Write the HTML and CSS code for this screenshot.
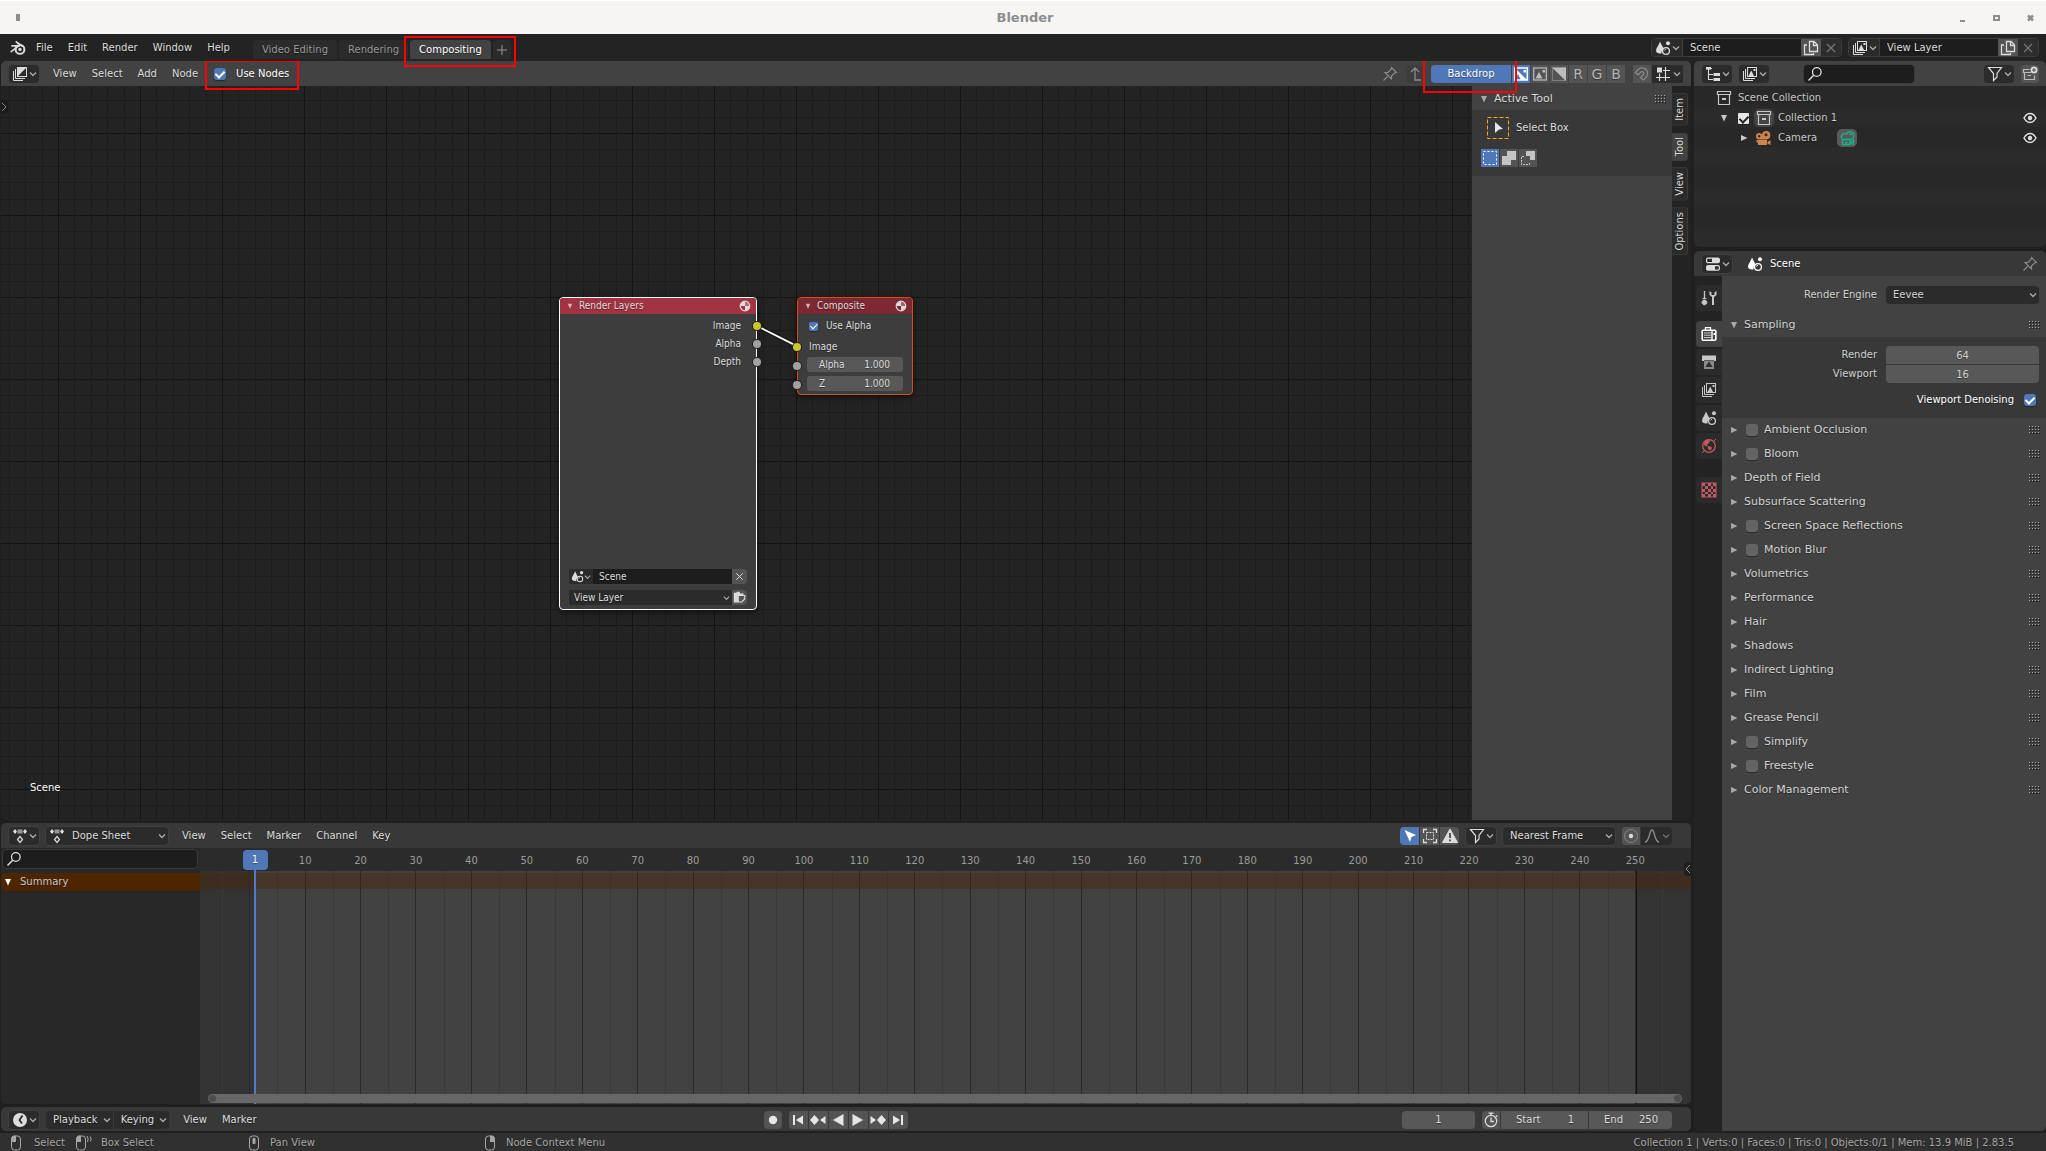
FILE: index.html
```html
<!DOCTYPE html>
<html lang="en">
<head>
    <meta charset="UTF-8">
    <meta name="viewport" content="width=device-width, initial-scale=1.0">
    <title>Blender</title>
    <link rel="stylesheet" href="styles.css">
</head>
<body>
    <!-- icon set, all on a 16x16 grid -->
    <svg class="icon-defs" width="0" height="0" aria-hidden="true">
        <symbol id="i-blender" viewBox="0 0 16 16"><circle cx="10" cy="9.4" r="4.4" fill="none" stroke="currentColor" stroke-width="2"/><circle cx="10" cy="9.4" r="1.7" fill="currentColor"/><path d="M2 5.8H9.5M6.3 2 12.5 6.2M1.2 11.6 8 6.3" fill="none" stroke="currentColor" stroke-width="1.7" stroke-linecap="round"/></symbol>
        <symbol id="i-chev" viewBox="0 0 8 8"><path d="M1 2.5 4 5.5 7 2.5" fill="none" stroke="currentColor" stroke-width="1.4"/></symbol>
        <symbol id="i-comp" viewBox="0 0 16 16"><path d="M1.5 5V14.5H11M3.5 3V12.5H13" fill="none" stroke="currentColor"/><rect x="5.5" y="1.5" width="9" height="9" fill="none" stroke="currentColor"/><path d="M5 11V1H15Z" fill="currentColor"/></symbol>
        <symbol id="i-layers" viewBox="0 0 16 16"><path d="M1.5 5V14.5H11M3.5 3V12.5H13" fill="none" stroke="currentColor"/><rect x="5.5" y="1.5" width="9" height="9" fill="none" stroke="currentColor"/><path d="M6.5 10 9.3 4.5 12 10Z" fill="currentColor"/><rect x="11.5" y="3" width="2" height="2" fill="currentColor"/></symbol>
        <symbol id="i-scene" viewBox="0 0 16 16"><path d="M5 1.5C6.5 5 8.5 7.5 8.5 9A4.5 4.5 0 0 0 6.5 13.5C3 14 1 12.5 1 10.5 1 8 4 5 5 1.5Z" fill="currentColor"/><circle cx="13" cy="3.3" r="2" fill="currentColor"/><circle cx="11" cy="11" r="3.4" fill="none" stroke="currentColor" stroke-width="1.3"/><path d="M9.5 10.5A2 2 0 0 1 11 9.2" fill="none" stroke="currentColor"/></symbol>
        <symbol id="i-copy" viewBox="0 0 16 16"><path d="M6.5 1.5H11L14.5 5V11.5H6.5ZM10.5 1.5V5.5H14.5M4 5H1.5V14.5H10.5V13" fill="none" stroke="currentColor" stroke-width="1.3"/></symbol>
        <symbol id="i-x" viewBox="0 0 16 16"><path d="M4 4 12 12M12 4 4 12" fill="none" stroke="currentColor" stroke-width="1.2"/></symbol>
        <symbol id="i-pin" viewBox="0 0 16 16"><path d="M9.5 1.5 14.5 6.5 12.5 7 9.5 10 9.5 13 3 6.5 6 6.5 9 3.5ZM5.5 10.5 1.5 14.5" fill="none" stroke="currentColor" stroke-width="1.1"/></symbol>
        <symbol id="i-up" viewBox="0 0 16 16"><path d="M4 6 8 2 12 6M8 2V14H14" fill="none" stroke="currentColor" stroke-width="1.3"/></symbol>
        <symbol id="i-coloralpha" viewBox="0 0 16 16"><rect x="1.7" y="2" width="12.6" height="12" fill="none" stroke="currentColor" stroke-width="1.5"/><path d="M2 2 14 14H8L5 8 3 12V5Z" fill="currentColor"/><rect x="10.5" y="4" width="2.5" height="2.5" fill="currentColor"/></symbol>
        <symbol id="i-color" viewBox="0 0 16 16"><rect x="1.7" y="2" width="12.6" height="12" fill="none" stroke="currentColor" stroke-width="1.2"/><path d="M3.5 12.5 7 6 10.5 12.5Z" fill="currentColor"/><rect x="10.5" y="4" width="2.5" height="2.5" fill="currentColor"/></symbol>
        <symbol id="i-alpha" viewBox="0 0 16 16"><rect x="1.5" y="2" width="13" height="12.5" fill="none" stroke="currentColor" opacity=".4"/><path d="M1 1.5H15V15Z" fill="currentColor"/></symbol>
        <symbol id="i-magnet" viewBox="0 0 16 16"><path d="M1.5 6.5 4 3.5A5.5 5.5 0 0 1 12 11.5L9 14 6.5 11.5 9.5 8.5A1.8 1.8 0 0 0 7 6L4 9Z" fill="none" stroke="currentColor" stroke-width="1.2"/></symbol>
        <symbol id="i-snapgrid" viewBox="0 0 16 16"><rect x="2" y="1.5" width="5" height="5" fill="currentColor"/><path d="M10.5 1V15M4.5 7.5V15M8 4.5H15M1 11.5H15" fill="none" stroke="currentColor" stroke-width="1.1"/></symbol>
        <symbol id="i-outliner" viewBox="0 0 16 16"><path d="M2 2.5H7M3.5 3V13.5H8M3.5 8.5H8" fill="none" stroke="currentColor" stroke-width="1.1"/><rect x="1" y="1" width="5" height="2.6" fill="currentColor"/><rect x="8.5" y="7" width="6.5" height="3" fill="currentColor"/><rect x="8.5" y="12" width="6.5" height="3" fill="currentColor"/></symbol>
        <symbol id="i-search" viewBox="0 0 16 16"><circle cx="9.8" cy="6" r="4.3" fill="none" stroke="currentColor" stroke-width="1.3"/><path d="M6.7 9.2 1.5 14.5" stroke="currentColor" stroke-width="1.5"/></symbol>
        <symbol id="i-filter" viewBox="0 0 16 16"><path d="M1.5 1.5H14.5L10 7.5V11L6.5 14.5V7.5Z" fill="none" stroke="currentColor" stroke-width="1.2"/></symbol>
        <symbol id="i-newcol" viewBox="0 0 16 16"><path d="M7.5 3.5H1.5V6.5H9M2.5 6.5V13.5H12.5V9.5M5.5 9.5H9" fill="none" stroke="currentColor" stroke-width="1.2" opacity=".75"/><circle cx="12" cy="4" r="3.5" fill="currentColor"/><path d="M12 2V6M10 4H14" stroke="#4c4c4c"/></symbol>
        <symbol id="i-collection" viewBox="0 0 16 16"><path d="M1.5 1.5H14.5V4.5H1.5ZM2.5 5V14.5H13.5V5" fill="none" stroke="currentColor" stroke-width="1.2"/><rect x="6" y="8" width="4" height="2" fill="currentColor"/></symbol>
        <symbol id="i-camera" viewBox="0 0 16 16"><path d="M1.5 10H12V15H3V12.5H1.5ZM12.5 12 15.5 10V15L12.5 13.5Z" fill="currentColor"/><path fill-rule="evenodd" d="M4.2 3A3.2 3.2 0 1 0 4.2 9.4H12A4.2 4.2 0 1 0 7 4.5 3.2 3.2 0 0 0 4.2 3ZM4.2 5A1.2 1.2 0 1 1 4.2 7.4 1.2 1.2 0 0 1 4.2 5ZM11 3.2A1.5 1.5 0 1 1 11 6.2 1.5 1.5 0 0 1 11 3.2Z" fill="currentColor"/></symbol>
        <symbol id="i-camdata" viewBox="0 0 16 16"><path d="M4 9.5H12A4 4 0 1 0 7.3 4 3 3 0 1 0 4 9.5ZM3.5 10V14.5H11V10M11.5 12.5 14.5 10.5V14.5L11.5 13M6 12.5H8.5M10.5 3.5A2 2 0 0 1 12.5 5.5" fill="none" stroke="currentColor" stroke-width="1.3"/></symbol>
        <symbol id="i-eye" viewBox="0 0 16 16"><path d="M2 8C4 4.3 6 3.5 8 3.5S12 4.3 14 8C12 11.7 10 12.5 8 12.5S4 11.7 2 8Z" fill="none" stroke="currentColor" stroke-width="1.5"/><circle cx="8" cy="8" r="2.2" fill="currentColor"/></symbol>
        <symbol id="i-props" viewBox="0 0 16 16"><rect x="1.6" y="2.1" width="12.8" height="4.6" rx="1.5" fill="none" stroke="currentColor" stroke-width="1.2"/><rect x="1.6" y="9.6" width="12.8" height="4.6" rx="1.5" fill="none" stroke="currentColor" stroke-width="1.2"/><rect x="7" y="2" width="7" height="5" fill="currentColor"/><rect x="2" y="10" width="8" height="4" fill="currentColor"/></symbol>
        <symbol id="i-tool" viewBox="0 0 16 16"><path d="M3.5 1V9" stroke="currentColor" stroke-width="1.3"/><path d="M1.5 8.5H5.5M3.5 10A2.4 2.4 0 1 1 3.4 10Z" fill="currentColor" stroke="currentColor"/><path d="M8.5 1V5L11 7V15H13V7L15.5 5V1L13.5 2.5V5H10.5V2.5Z" fill="currentColor"/></symbol>
        <symbol id="i-render" viewBox="0 0 16 16"><path d="M4.5 4V1.7H9.5V4" fill="none" stroke="currentColor" stroke-width="1.3"/><rect x="1.2" y="4.2" width="13.6" height="10" rx="1" fill="none" stroke="currentColor" stroke-width="1.6"/><path d="M3 7H10M3 9.3H10M3 11.5H10" stroke="currentColor" stroke-width="1.1" opacity=".7"/><path d="M11 4V14.5" stroke="currentColor" stroke-width="1.4"/><rect x="12.5" y="7" width="2" height="2" fill="currentColor"/></symbol>
        <symbol id="i-output" viewBox="0 0 16 16"><path d="M1 1.5H15V7H13V4H3V7H1Z" fill="currentColor"/><rect x="3" y="6.5" width="10" height="8.5" fill="currentColor" opacity=".6"/><path d="M4.5 13 8 7.5 11.5 13Z" fill="#2b2b2b"/><path d="M1 5H15" stroke="currentColor" stroke-width="2"/></symbol>
        <symbol id="i-world" viewBox="0 0 16 16"><circle cx="8" cy="8" r="6.3" fill="none" stroke="currentColor" stroke-width="1.3"/><path d="M3 4 6 2 8.5 2.5 7.5 5 5.5 6 6 8 3.5 7ZM7 8.5 10.5 9.5 9.5 12 8 11.5Z" fill="currentColor" stroke="currentColor"/><path d="M1 15 3.5 12.5M12.5 3.5 15 1" stroke="currentColor"/></symbol>
        <symbol id="i-texture" viewBox="0 0 16 16"><rect x="1" y="1" width="14" height="14" fill="none" stroke="currentColor"/><path d="M1 1H4V4H1ZM7 1H10V4H7ZM12 1H15V4H12ZM4 4H7V7H4ZM10 4H12V7H10ZM1 7H4V10H1ZM7 7H10V10H7ZM12 7H15V10H12ZM4 10H7V12H4ZM10 10H12V12H10ZM1 12H4V15H1ZM7 12H10V15H7ZM12 12H15V15H12Z" fill="currentColor"/></symbol>
        <symbol id="i-dope" viewBox="0 0 16 16"><path d="M3 1 5 3.5 3 6 1 3.5ZM13 1 15 3.5 13 6 11 3.5Z" fill="currentColor"/><rect x="5.5" y="1.5" width="5" height="4" fill="currentColor" opacity=".6"/><path d="M8 8.5 10.5 11.5 8 14.5 5.5 11.5Z" fill="none" stroke="currentColor" stroke-width="1.2"/></symbol>
        <symbol id="i-clock" viewBox="0 0 16 16"><circle cx="8" cy="8" r="7" fill="currentColor"/><path d="M10.5 3.5 7.5 8 10 11.5" fill="none" stroke="#2b2b2b" stroke-width="1.8"/></symbol>
        <symbol id="i-arrow" viewBox="0 0 16 16"><path d="M2.5 2 14 7 9.5 9 8 14Z" fill="currentColor"/></symbol>
        <symbol id="i-hidden" viewBox="0 0 16 16"><path d="M1.5 5V1.5H5M11 1.5H14.5V5M14.5 11V14.5H11M5 14.5H1.5V11" fill="none" stroke="currentColor" stroke-width="1.3"/><rect x="4.5" y="4.5" width="7" height="7" fill="none" stroke="currentColor" stroke-dasharray="2 1"/></symbol>
        <symbol id="i-warn" viewBox="0 0 16 16"><path d="M8 1 15.5 14.5H.5Z" fill="currentColor" stroke="currentColor" stroke-linejoin="round"/><path d="M8 5V10M8 11.5V13.3" stroke="#545454" stroke-width="2"/></symbol>
        <symbol id="i-prop" viewBox="0 0 16 16"><circle cx="8" cy="8" r="6.5" fill="none" stroke="currentColor" opacity=".35"/><circle cx="8" cy="8" r="2.2" fill="currentColor"/></symbol>
        <symbol id="i-falloff" viewBox="0 0 16 16"><path d="M1 14C6 13.5 5 2 8 2S10 13.5 15 14" fill="none" stroke="currentColor" stroke-width="1.3"/></symbol>
        <symbol id="i-stopwatch" viewBox="0 0 16 16"><circle cx="8" cy="9" r="5.7" fill="none" stroke="currentColor" stroke-width="1.2"/><path d="M5.5 1.2H10.5M8 1.5V3.5M8 5.5V9.5H11M13 3.5 14.3 4.8" fill="none" stroke="currentColor" stroke-width="1.3"/></symbol>
        <symbol id="i-mat" viewBox="0 0 16 16"><circle cx="8" cy="8" r="6.4" fill="none" stroke="currentColor" stroke-width="1.6"/><path d="M8 8V2A6 6 0 0 0 2 8ZM8 8V14A6 6 0 0 0 14 8Z" fill="currentColor"/><path d="M8 8V2A6 6 0 0 1 14 8Z" fill="currentColor" opacity=".35"/></symbol>
        <symbol id="i-rlayer" viewBox="0 0 16 16"><path d="M1 2H4L5 1H8L9 3H13V5H6V14H1Z" fill="currentColor"/><path d="M6.5 5.5H14.5V9.5L11 13.5H6.5Z" fill="none" stroke="currentColor" stroke-width="1.4"/></symbol>
        <symbol id="i-record" viewBox="0 0 16 16"><circle cx="8" cy="8" r="4.2" fill="currentColor"/></symbol>
        <symbol id="i-first" viewBox="0 0 16 16"><path d="M3 3H5V13H3ZM13 3.5V12.5L6 8Z" fill="currentColor"/></symbol>
        <symbol id="i-prevkey" viewBox="0 0 16 16"><path d="M4.5 3 9 8 4.5 13 0 8ZM15.5 4V12L10 8Z" fill="currentColor"/></symbol>
        <symbol id="i-back" viewBox="0 0 16 16"><path d="M13.5 2V14L3 8Z" fill="currentColor"/></symbol>
        <symbol id="i-play" viewBox="0 0 16 16"><path d="M2.5 2V14L13 8Z" fill="currentColor"/></symbol>
        <symbol id="i-nextkey" viewBox="0 0 16 16"><path d="M11.5 3 16 8 11.5 13 7 8ZM.5 4V12L6 8Z" fill="currentColor"/></symbol>
        <symbol id="i-last" viewBox="0 0 16 16"><path d="M11 3H13V13H11ZM3 3.5V12.5L10 8Z" fill="currentColor"/></symbol>
        <symbol id="i-lmb" viewBox="0 0 16 16"><rect x="3.5" y="1" width="9" height="14" rx="3" fill="none" stroke="currentColor"/><path d="M3.5 7V4A3 3 0 0 1 8 1V7Z" fill="currentColor"/></symbol>
        <symbol id="i-lmbdrag" viewBox="0 0 18 16"><rect x="1.5" y="1" width="9" height="14" rx="3" fill="none" stroke="currentColor"/><path d="M1.5 7V4A3 3 0 0 1 6 1V7Z" fill="currentColor"/><path d="M12 1Q14 4 12.5 7M15 1.5Q17 4 15.5 6.5" fill="none" stroke="currentColor"/></symbol>
        <symbol id="i-mmb" viewBox="0 0 16 16"><rect x="3.5" y="1" width="9" height="14" rx="3" fill="none" stroke="currentColor"/><rect x="6.5" y="3" width="3" height="6" rx="1" fill="currentColor"/></symbol>
        <symbol id="i-rmb" viewBox="0 0 16 16"><rect x="3.5" y="1" width="9" height="14" rx="3" fill="none" stroke="currentColor"/><path d="M12.5 7V4A3 3 0 0 0 8 1V7Z" fill="currentColor"/></symbol>
        <symbol id="i-grip" viewBox="0 0 11 8"><path d="M0 .5H1M3 .5H4M6 .5H7M9 .5H10M0 3.5H1M3 3.5H4M6 3.5H7M9 3.5H10M0 6.5H1M3 6.5H4M6 6.5H7M9 6.5H10" stroke="#a8a8a8"/><path d="M1 1.5H2M4 1.5H5M7 1.5H8M10 1.5H11M1 4.5H2M4 4.5H5M7 4.5H8M10 4.5H11M1 7.5H2M4 7.5H5M7 7.5H8M10 7.5H11" stroke="#151515"/></symbol>
        <symbol id="i-down" viewBox="0 0 8 8"><path d="M1 1H7L4 7.5Z" fill="currentColor"/></symbol>
        <symbol id="i-right" viewBox="0 0 8 8"><path d="M1 1V7L7.5 4Z" fill="currentColor"/></symbol>
    </svg>

    <header class="titlebar">
        <span class="app-mark"></span>
        <h1>Blender</h1>
        <svg class="wm-buttons" width="74" height="10"><path d="M0 7H5V9H0Z" fill="#8b8e8f"/><path d="M33 2H40V8H33ZM35 4V6H38V4Z" fill="#8b8e8f" fill-rule="evenodd"/><path d="M68 2.5 73 7.5M73 2.5 68 7.5" stroke="#8b8e8f" stroke-width="2.5"/></svg>
    </header>

    <div class="topbar">
        <svg class="icon logo"><use href="#i-blender"/></svg>
        <nav class="menus">
            <button>File</button>
            <button>Edit</button>
            <button>Render</button>
            <button>Window</button>
            <button>Help</button>
        </nav>
        <div class="workspaces">
            <button>Video Editing</button>
            <button>Rendering</button>
            <div class="marked">
                <button class="active">Compositing</button>
                <button class="add" aria-label="Add workspace"><svg width="10" height="10"><path d="M5 0V10M0 5H10" stroke="currentColor"/></svg></button>
            </div>
        </div>
        <div class="id-blocks">
            <div class="id-block">
                <button class="drop" aria-label="Browse scene"><svg class="icon"><use href="#i-scene"/></svg><svg class="chev"><use href="#i-chev"/></svg></button>
                <input type="text" value="Scene" aria-label="Scene">
                <button class="light" aria-label="New scene"><svg class="icon"><use href="#i-copy"/></svg></button>
                <button class="off" aria-label="Delete scene"><svg class="icon"><use href="#i-x"/></svg></button>
            </div>
            <div class="id-block">
                <button class="drop" aria-label="Browse view layer"><svg class="icon"><use href="#i-layers"/></svg><svg class="chev"><use href="#i-chev"/></svg></button>
                <input type="text" value="View Layer" aria-label="View layer">
                <button class="light" aria-label="New view layer"><svg class="icon"><use href="#i-copy"/></svg></button>
                <button class="off" aria-label="Delete view layer"><svg class="icon"><use href="#i-x"/></svg></button>
            </div>
        </div>
    </div>

    <div class="screen">
        <main class="left">
            <!-- compositor -->
            <section class="area node-editor">
                <div class="area-header light-header">
                    <button class="drop" aria-label="Editor type"><svg class="icon"><use href="#i-comp"/></svg><svg class="chev"><use href="#i-chev"/></svg></button>
                    <nav class="menus">
                        <button>View</button>
                        <button>Select</button>
                        <button>Add</button>
                        <button>Node</button>
                    </nav>
                    <div class="marked use-nodes">
                        <label><input type="checkbox" class="check" checked>Use Nodes</label>
                    </div>
                    <div class="tools">
                        <button class="plain" aria-label="Pin"><svg class="icon"><use href="#i-pin"/></svg></button>
                        <button class="plain parent" aria-label="Go to parent"><svg class="icon"><use href="#i-up"/></svg></button>
                        <div class="group">
                            <div class="marked backdrop"><button class="on">Backdrop</button></div>
                            <button class="on" aria-label="Color and alpha"><svg class="icon"><use href="#i-coloralpha"/></svg></button>
                            <button class="soft" aria-label="Color"><svg class="icon"><use href="#i-color"/></svg></button>
                            <button class="soft" aria-label="Alpha"><svg class="icon"><use href="#i-alpha"/></svg></button>
                            <button class="channel">R</button>
                            <button class="channel">G</button>
                            <button class="channel">B</button>
                        </div>
                        <div class="group">
                            <button class="dim" aria-label="Snap"><svg class="icon"><use href="#i-magnet"/></svg></button>
                            <button class="drop" aria-label="Snap target"><svg class="icon"><use href="#i-snapgrid"/></svg><svg class="chev"><use href="#i-chev"/></svg></button>
                        </div>
                    </div>
                </div>
                <div class="node-body">
                    <div class="canvas">
                        <svg class="grid" width="100%" height="100%">
                            <defs>
                                <pattern id="grid" x="57" y="47" width="82" height="82" patternUnits="userSpaceOnUse">
                                    <path d="M16.5 0V82M33.5 0V82M49.5 0V82M66.5 0V82M0 16.5H82M0 33.5H82M0 49.5H82M0 66.5H82" stroke="#1c1c1c"/>
                                    <path d="M.5 0V82M0 .5H82" stroke="#141414"/>
                                </pattern>
                            </defs>
                            <rect width="100%" height="100%" fill="url(#grid)"/>
                        </svg>
                        <button class="toggle-left" aria-label="Show toolbar"><svg width="8" height="8"><path d="M1 0 5 4 1 8" fill="none" stroke="#888"/></svg></button>

                        <div class="node render-layers">
                            <div class="node-title"><svg class="tri"><use href="#i-down"/></svg>Render Layers<svg class="mat"><use href="#i-mat"/></svg></div>
                            <ul class="outputs">
                                <li>Image<i class="socket yellow"></i></li>
                                <li>Alpha<i class="socket"></i></li>
                                <li>Depth<i class="socket"></i></li>
                            </ul>
                            <div class="node-footer">
                                <div class="node-row">
                                    <button class="drop" aria-label="Browse scene"><svg class="icon"><use href="#i-scene"/></svg><svg class="chev"><use href="#i-chev"/></svg></button>
                                    <input type="text" value="Scene" aria-label="Scene">
                                    <button class="end" aria-label="Unlink"><svg class="icon"><use href="#i-x"/></svg></button>
                                </div>
                                <div class="node-row">
                                    <span class="select"><select aria-label="Layer"><option>View Layer</option></select><svg class="chev"><use href="#i-chev"/></svg></span>
                                    <button class="end" aria-label="Render layer"><svg class="icon"><use href="#i-rlayer"/></svg></button>
                                </div>
                            </div>
                        </div>

                        <div class="node composite">
                            <div class="node-title"><svg class="tri"><use href="#i-down"/></svg>Composite<svg class="mat"><use href="#i-mat"/></svg></div>
                            <label class="use-alpha"><input type="checkbox" class="check" checked>Use Alpha</label>
                            <ul class="inputs">
                                <li><i class="socket yellow"></i>Image</li>
                                <li><i class="socket"></i><label class="slider">Alpha<input type="text" value="1.000"></label></li>
                                <li><i class="socket"></i><label class="slider">Z<input type="text" value="1.000"></label></li>
                            </ul>
                        </div>

                        <svg class="link" width="42" height="24"><path d="M0 1 42 22" stroke="#111" stroke-width="4"/><path d="M0 1 42 22" stroke="#fff" stroke-width="2"/></svg>
                        <span class="backdrop-name">Scene</span>
                    </div>
                    <aside class="sidebar">
                        <h2 class="panel-title"><svg class="tri"><use href="#i-down"/></svg>Active Tool<svg class="grip"><use href="#i-grip"/></svg></h2>
                        <div class="tool-panel">
                            <div class="tool-name">
                                <svg width="22" height="22"><rect x=".5" y=".5" width="21" height="21" fill="none" stroke="#f5a623" stroke-dasharray="4 2"/><path d="M8 5 16 12 12 12.5 8 16Z" fill="#e6e6e6"/></svg>
                                Select Box
                            </div>
                            <div class="group">
                                <button class="on" aria-label="Set"><svg class="icon"><rect x="1.5" y="1.5" width="13" height="13" fill="none" stroke="#fff" stroke-dasharray="2 2"/></svg></button>
                                <button aria-label="Extend"><svg class="icon"><path d="M6 1H15V10H10V15H1V6H6Z" fill="#c4c4c4"/></svg></button>
                                <button aria-label="Subtract"><svg class="icon"><path d="M6 1H15V10H10V6H6Z" fill="#c4c4c4"/><path d="M4 6.5H1.5V14.5H9.5V12" fill="none" stroke="#c4c4c4" stroke-dasharray="2 1"/></svg></button>
                            </div>
                        </div>
                    </aside>
                    <div class="side-tabs">
                        <button>Item</button>
                        <button class="active">Tool</button>
                        <button>View</button>
                        <button>Options</button>
                    </div>
                </div>
            </section>

            <!-- dope sheet -->
            <section class="area dope-sheet">
                <div class="area-header">
                    <button class="drop" aria-label="Editor type"><svg class="icon"><use href="#i-dope"/></svg><svg class="chev"><use href="#i-chev"/></svg></button>
                    <span class="select mode"><svg class="icon"><use href="#i-dope"/></svg><select aria-label="Mode"><option>Dope Sheet</option></select><svg class="chev"><use href="#i-chev"/></svg></span>
                    <nav class="menus">
                        <button>View</button>
                        <button>Select</button>
                        <button>Marker</button>
                        <button>Channel</button>
                        <button>Key</button>
                    </nav>
                    <div class="tools">
                        <div class="group toggles">
                            <button class="on" aria-label="Only selected"><svg class="icon"><use href="#i-arrow"/></svg></button>
                            <button aria-label="Show hidden"><svg class="icon"><use href="#i-hidden"/></svg></button>
                            <button aria-label="Only errors"><svg class="icon"><use href="#i-warn"/></svg></button>
                        </div>
                        <button class="drop" aria-label="Filters"><svg class="icon"><use href="#i-filter"/></svg><svg class="chev"><use href="#i-chev"/></svg></button>
                        <span class="select snap"><select aria-label="Auto snap"><option>Nearest Frame</option></select><svg class="chev"><use href="#i-chev"/></svg></span>
                        <div class="group">
                            <button aria-label="Proportional editing"><svg class="icon"><use href="#i-prop"/></svg></button>
                            <button class="drop dim" aria-label="Falloff"><svg class="icon"><use href="#i-falloff"/></svg><svg class="chev"><use href="#i-chev"/></svg></button>
                        </div>
                    </div>
                </div>
                <div class="dope-body">
                    <div class="channels">
                        <label class="search"><svg class="icon"><use href="#i-search"/></svg><input type="text" aria-label="Filter channels"></label>
                        <div class="summary"><svg class="tri"><use href="#i-down"/></svg>Summary</div>
                    </div>
                    <div class="tracks">
                        <div class="range"></div>
                        <div class="frames">
                            <span></span><span>10</span><span>20</span><span>30</span><span>40</span><span>50</span><span>60</span>
                            <span>70</span><span>80</span><span>90</span><span>100</span><span>110</span><span>120</span><span>130</span>
                            <span>140</span><span>150</span><span>160</span><span>170</span><span>180</span><span>190</span><span>200</span>
                            <span>210</span><span>220</span><span>230</span><span>240</span><span>250</span>
                        </div>
                        <div class="summary-strip"></div>
                        <div class="playhead"><b>1</b></div>
                        <div class="scrollbar"></div>
                        <button class="toggle-right" aria-label="Show sidebar"><svg width="6" height="8"><path d="M5 0 1 4 5 8" fill="none" stroke="#999"/></svg></button>
                    </div>
                </div>
            </section>

            <!-- timeline -->
            <section class="area">
                <div class="area-header timeline">
                    <div class="timeline-left">
                        <button class="drop" aria-label="Editor type"><svg class="icon"><use href="#i-clock"/></svg><svg class="chev"><use href="#i-chev"/></svg></button>
                        <div class="group popovers">
                            <button class="drop">Playback<svg class="chev"><use href="#i-chev"/></svg></button>
                            <button class="drop">Keying<svg class="chev"><use href="#i-chev"/></svg></button>
                        </div>
                        <nav class="menus">
                            <button>View</button>
                            <button>Marker</button>
                        </nav>
                    </div>
                    <div class="transport">
                        <div class="group"><button aria-label="Auto keying"><svg class="icon"><use href="#i-record"/></svg></button></div>
                        <div class="group">
                            <button aria-label="First frame"><svg class="icon"><use href="#i-first"/></svg></button>
                            <button aria-label="Previous keyframe"><svg class="icon"><use href="#i-prevkey"/></svg></button>
                            <button aria-label="Play backwards"><svg class="icon"><use href="#i-back"/></svg></button>
                            <button aria-label="Play"><svg class="icon"><use href="#i-play"/></svg></button>
                            <button aria-label="Next keyframe"><svg class="icon"><use href="#i-nextkey"/></svg></button>
                            <button aria-label="Last frame"><svg class="icon"><use href="#i-last"/></svg></button>
                        </div>
                    </div>
                    <div class="tools">
                        <div class="group"><input type="text" class="current" value="1" aria-label="Current frame"></div>
                        <div class="group">
                            <button aria-label="Preview range"><svg class="icon"><use href="#i-stopwatch"/></svg></button>
                            <label class="num">Start<input type="text" value="1"></label>
                            <label class="num">End<input type="text" value="250"></label>
                        </div>
                    </div>
                </div>
            </section>
        </main>

        <aside class="right">
            <!-- outliner -->
            <section class="area outliner">
                <div class="area-header light-header">
                    <button class="drop" aria-label="Editor type"><svg class="icon"><use href="#i-outliner"/></svg><svg class="chev"><use href="#i-chev"/></svg></button>
                    <button class="drop" aria-label="Display mode"><svg class="icon"><use href="#i-layers"/></svg><svg class="chev"><use href="#i-chev"/></svg></button>
                    <label class="search"><svg class="icon"><use href="#i-search"/></svg><input type="text" aria-label="Filter"></label>
                    <button class="drop" aria-label="Filters"><svg class="icon"><use href="#i-filter"/></svg><svg class="chev"><use href="#i-chev"/></svg></button>
                    <div class="group"><button aria-label="New collection"><svg class="icon"><use href="#i-newcol"/></svg></button></div>
                </div>
                <ul class="tree">
                    <li><svg class="icon"><use href="#i-collection"/></svg>Scene Collection</li>
                    <li class="level1">
                        <svg class="tri"><use href="#i-down"/></svg>
                        <input type="checkbox" class="check white" checked aria-label="Include collection">
                        <span class="badge"><svg class="icon"><use href="#i-collection"/></svg></span>Collection 1
                        <svg class="icon eye"><use href="#i-eye"/></svg>
                    </li>
                    <li class="level2">
                        <svg class="tri"><use href="#i-right"/></svg>
                        <svg class="icon orange"><use href="#i-camera"/></svg>Camera
                        <span class="badge green"><svg class="icon"><use href="#i-camdata"/></svg></span>
                        <svg class="icon eye"><use href="#i-eye"/></svg>
                    </li>
                    <li></li>
                    <li></li>
                    <li></li>
                    <li></li>
                    <li></li>
                </ul>
            </section>

            <!-- properties -->
            <section class="area properties">
                <div class="area-header">
                    <button class="drop" aria-label="Editor type"><svg class="icon"><use href="#i-props"/></svg><svg class="chev"><use href="#i-chev"/></svg></button>
                    <span class="context"><svg class="icon"><use href="#i-scene"/></svg>Scene</span>
                    <div class="tools"><button class="plain" aria-label="Pin"><svg class="icon"><use href="#i-pin"/></svg></button></div>
                </div>
                <div class="props-body">
                    <nav class="prop-tabs">
                        <button class="alone" aria-label="Tool"><svg class="icon"><use href="#i-tool"/></svg></button>
                        <button class="active" aria-label="Render"><svg class="icon"><use href="#i-render"/></svg></button>
                        <button aria-label="Output"><svg class="icon"><use href="#i-output"/></svg></button>
                        <button aria-label="View layer"><svg class="icon"><use href="#i-layers"/></svg></button>
                        <button aria-label="Scene"><svg class="icon"><use href="#i-scene"/></svg></button>
                        <button class="red" aria-label="World"><svg class="icon"><use href="#i-world"/></svg></button>
                        <button class="red last" aria-label="Texture"><svg class="icon"><use href="#i-texture"/></svg></button>
                    </nav>
                    <div class="panels">
                        <div class="prop-row engine">
                            <label for="engine">Render Engine</label>
                            <span class="select"><select id="engine"><option>Eevee</option></select><svg class="chev"><use href="#i-chev"/></svg></span>
                        </div>
                        <h2 class="panel-title"><svg class="tri"><use href="#i-down"/></svg>Sampling<svg class="grip"><use href="#i-grip"/></svg></h2>
                        <div class="sampling">
                            <div class="prop-row"><label for="s-render">Render</label><input type="text" id="s-render" value="64"></div>
                            <div class="prop-row"><label for="s-viewport">Viewport</label><input type="text" id="s-viewport" value="16"></div>
                            <label class="denoise">Viewport Denoising<input type="checkbox" class="check" checked></label>
                        </div>
                        <h2 class="panel-title"><svg class="tri"><use href="#i-right"/></svg><label><input type="checkbox" class="check">Ambient Occlusion</label><svg class="grip"><use href="#i-grip"/></svg></h2>
                        <h2 class="panel-title"><svg class="tri"><use href="#i-right"/></svg><label><input type="checkbox" class="check">Bloom</label><svg class="grip"><use href="#i-grip"/></svg></h2>
                        <h2 class="panel-title"><svg class="tri"><use href="#i-right"/></svg>Depth of Field<svg class="grip"><use href="#i-grip"/></svg></h2>
                        <h2 class="panel-title"><svg class="tri"><use href="#i-right"/></svg>Subsurface Scattering<svg class="grip"><use href="#i-grip"/></svg></h2>
                        <h2 class="panel-title"><svg class="tri"><use href="#i-right"/></svg><label><input type="checkbox" class="check">Screen Space Reflections</label><svg class="grip"><use href="#i-grip"/></svg></h2>
                        <h2 class="panel-title"><svg class="tri"><use href="#i-right"/></svg><label><input type="checkbox" class="check">Motion Blur</label><svg class="grip"><use href="#i-grip"/></svg></h2>
                        <h2 class="panel-title"><svg class="tri"><use href="#i-right"/></svg>Volumetrics<svg class="grip"><use href="#i-grip"/></svg></h2>
                        <h2 class="panel-title"><svg class="tri"><use href="#i-right"/></svg>Performance<svg class="grip"><use href="#i-grip"/></svg></h2>
                        <h2 class="panel-title"><svg class="tri"><use href="#i-right"/></svg>Hair<svg class="grip"><use href="#i-grip"/></svg></h2>
                        <h2 class="panel-title"><svg class="tri"><use href="#i-right"/></svg>Shadows<svg class="grip"><use href="#i-grip"/></svg></h2>
                        <h2 class="panel-title"><svg class="tri"><use href="#i-right"/></svg>Indirect Lighting<svg class="grip"><use href="#i-grip"/></svg></h2>
                        <h2 class="panel-title"><svg class="tri"><use href="#i-right"/></svg>Film<svg class="grip"><use href="#i-grip"/></svg></h2>
                        <h2 class="panel-title"><svg class="tri"><use href="#i-right"/></svg>Grease Pencil<svg class="grip"><use href="#i-grip"/></svg></h2>
                        <h2 class="panel-title"><svg class="tri"><use href="#i-right"/></svg><label><input type="checkbox" class="check">Simplify</label><svg class="grip"><use href="#i-grip"/></svg></h2>
                        <h2 class="panel-title"><svg class="tri"><use href="#i-right"/></svg><label><input type="checkbox" class="check">Freestyle</label><svg class="grip"><use href="#i-grip"/></svg></h2>
                        <h2 class="panel-title"><svg class="tri"><use href="#i-right"/></svg>Color Management<svg class="grip"><use href="#i-grip"/></svg></h2>
                    </div>
                </div>
            </section>
        </aside>
    </div>

    <footer class="statusbar">
        <span class="hint select-hint"><svg class="icon"><use href="#i-lmb"/></svg>Select</span>
        <span class="hint box-hint"><svg class="icon"><use href="#i-lmbdrag"/></svg>Box Select</span>
        <span class="hint pan-hint"><svg class="icon"><use href="#i-mmb"/></svg>Pan View</span>
        <span class="hint"><svg class="icon"><use href="#i-rmb"/></svg>Node Context Menu</span>
        <span class="stats">Collection 1 | Verts:0 | Faces:0 | Tris:0 | Objects:0/1 | Mem: 13.9 MiB | 2.83.5</span>
    </footer>
</body>
</html>
```
FILE: styles.css
```css
* {
    box-sizing: border-box;
}
body {
    margin: 0;
    height: 100vh;
    display: flex;
    flex-direction: column;
    overflow: hidden;
    background: #1f1f1f;
    color: #dcdcdc;
    font-family: "DejaVu Sans", sans-serif;
    font-size: 10px;
    line-height: 16px;
    text-shadow: 0 1px 1px rgba(0, 0, 0, 0.4);
}
button, input, select {
    font: inherit;
    color: inherit;
    text-shadow: inherit;
    background: none;
    border: 0;
    margin: 0;
    padding: 0;
    min-width: 0;
}
button {
    display: flex;
    align-items: center;
    justify-content: center;
    flex-shrink: 0;
}
ul {
    list-style: none;
    margin: 0;
    padding: 0;
}
.icon-defs {
    position: absolute;
}
.icon {
    width: 16px;
    height: 16px;
    flex-shrink: 0;
}
.chev, .tri {
    width: 8px;
    height: 8px;
    flex-shrink: 0;
}
.chev {
    color: #a8a8a8;
}
.grip {
    width: 11px;
    height: 8px;
    margin-left: auto;
}
/* red outlines around the controls to notice */
.marked {
    position: relative;
    display: flex;
}
.marked::after {
    content: "";
    position: absolute;
    z-index: 2;
    border: 2px solid #ff0000;
    pointer-events: none;
}

/* window title */
.titlebar {
    height: 34px;
    flex-shrink: 0;
    display: flex;
    align-items: center;
    justify-content: space-between;
    padding: 0 12px 0 16px;
    background: #f6f5f4;
    border-top: 1px solid #fff;
    text-shadow: none;
}
.titlebar h1 {
    margin: 0 0 0 70px;
    font-size: 13px;
    color: #8b8e8f;
}
.app-mark {
    width: 4px;
    height: 7px;
    background: #8b8e8f;
}

/* top bar */
.topbar {
    height: 27px;
    flex-shrink: 0;
    display: flex;
    padding: 0 7px 0 10px;
    background: #232323;
}
.logo {
    margin-top: 6px;
    margin-right: 2px;
}
.menus {
    display: flex;
}
.menus button {
    padding: 0 7px 0 8px;
}
.topbar .menus {
    height: 27px;
}
.workspaces {
    display: flex;
    gap: 2px;
    margin-left: 16px;
    padding-top: 6px;
    padding-bottom: 2px;
}
.workspaces .marked {
    gap: 2px;
}
.workspaces button {
    padding: 0 9px;
    border-radius: 4px 4px 0 0;
    background: #2b2b2b;
    color: #989898;
}
.workspaces .active {
    background: #424242;
    color: #fff;
}
.workspaces .add {
    padding: 0 4px;
}
.workspaces .marked::after {
    inset: -4px -5px -8px -6px;
}
.id-blocks {
    display: flex;
    gap: 6px;
    margin-left: auto;
    padding: 4px 0;
}
.id-block {
    display: flex;
    width: 191px;
    border: 1px solid #3d3d3d;
    border-radius: 4px;
    background: #1d1d1d;
    overflow: hidden;
}
.id-block input {
    flex: 1;
    padding-left: 7px;
    border-left: 1px solid #3d3d3d;
}
.id-block .drop {
    width: 30px;
    height: auto;
    border: 0;
    border-radius: 0;
}
.id-block .light, .id-block .off {
    width: 20px;
    background: #545454;
}
.id-block .off {
    background: #2d2d2d;
    color: #777;
}

/* editors */
.screen {
    flex: 1;
    min-height: 0;
    display: flex;
    gap: 3px;
    padding-left: 1px;
}
.left {
    flex: 1;
    min-width: 0;
    display: flex;
    flex-direction: column;
    gap: 3px;
}
.right {
    width: 352px;
    display: flex;
    flex-direction: column;
    gap: 4px;
}
.area {
    border-radius: 5px;
    overflow: hidden;
}
.area-header {
    height: 25px;
    display: flex;
    align-items: center;
    padding: 1px 0 0 8px;
    background: #383838;
}
.light-header {
    background: #424242;
}
.area-header .menus {
    margin-left: 6px;
}
.tools {
    display: flex;
    align-items: center;
    gap: 7px;
    margin-left: auto;
}
.drop {
    width: 30px;
    height: 18px;
    padding: 0 2px 0 3px;
    justify-content: space-between;
    background: #2b2b2b;
    border-radius: 4px;
    box-shadow: 0 0 0 1px #404040;
}
.id-block .drop, .group .drop, .node .drop {
    box-shadow: none;
}
.group {
    display: flex;
    gap: 1px;
    height: 18px;
    border-radius: 4px;
    overflow: hidden;
}
.group > button {
    width: 18px;
    background: #545454;
}
.group > .drop {
    width: 31px;
    background: #2b2b2b;
    border-radius: 0;
}
.group > .on, .backdrop .on {
    background: #5078b8;
    color: #fff;
}
.select {
    position: relative;
    display: flex;
    align-items: center;
    height: 18px;
    background: #2b2b2b;
    border-radius: 4px;
    box-shadow: 0 0 0 1px #404040;
}
.select select {
    appearance: none;
    width: 100%;
    height: 100%;
    padding-left: 7px;
}
.select .chev {
    position: absolute;
    right: 2px;
    pointer-events: none;
}
.check {
    appearance: none;
    width: 12px;
    height: 12px;
    flex-shrink: 0;
    border-radius: 3px;
    background: #636363;
    box-shadow: 0 1px 1px rgba(0, 0, 0, 0.4);
}
.check:checked {
    background: #5078b8;
}
.check:checked::before {
    content: "";
    display: block;
    width: 4px;
    height: 7px;
    margin: 1px auto;
    border: solid #fff;
    border-width: 0 2px 2px 0;
    transform: rotate(45deg);
}
.search {
    display: flex;
    align-items: center;
    height: 18px;
    padding: 0 3px;
    background: #1d1d1d;
    border-radius: 4px;
    box-shadow: 0 0 0 1px #3a3a3a;
}
.search input {
    flex: 1;
}
.panel-title {
    display: flex;
    align-items: center;
    height: 24px;
    margin: 0;
    padding: 0 6px 0 8px;
    font-size: 11px;
    font-weight: normal;
}
.panel-title .tri {
    margin-right: 6px;
    color: #a8a8a8;
}
.panel-title label {
    display: flex;
    align-items: center;
    gap: 6px;
    margin-left: 2px;
}

/* node editor */
.node-editor {
    flex: 1;
    min-height: 0;
    display: flex;
    flex-direction: column;
}
.node-editor .area-header {
    flex-shrink: 0;
}
.use-nodes {
    margin-left: 9px;
}
.use-nodes label {
    display: flex;
    align-items: center;
    gap: 10px;
    color: #fff;
}
.use-nodes::after {
    inset: -6px -10px -8px -9px;
}
.node-editor .tools {
    gap: 8px;
    padding-right: 8px;
}
.plain {
    width: 17px;
    height: 18px;
    color: #8c8c8c;
}
.parent {
    background: #3d3d3d;
    border-radius: 4px;
}
.node-editor .group {
    overflow: visible;
}
.backdrop .on {
    width: 80px;
    border-radius: 4px 0 0 4px;
}
.backdrop::after {
    inset: -8px -6px -10px -8px;
}
.soft {
    color: #bcbcbc;
}
.channel {
    font-size: 14px;
    color: #b5b5b5;
}
.node-body {
    flex: 1;
    min-height: 0;
    display: flex;
    background: #232323;
}
.canvas {
    position: relative;
    flex: 1;
    overflow: hidden;
}
.grid {
    display: block;
}
.toggle-left {
    position: absolute;
    left: 0;
    top: 14px;
    width: 7px;
    height: 14px;
    background: #1b1b1b;
    border-radius: 0 4px 4px 0;
}
.node {
    position: absolute;
    top: 211px;
    background: #3d3d3d;
    border: 1px solid #fff;
    border-radius: 4px;
    box-shadow: 0 2px 6px rgba(0, 0, 0, 0.6);
    font-family: "DejaVu Sans Condensed", "DejaVu Sans", sans-serif;
}
.render-layers {
    left: 558px;
    width: 198px;
    height: 313px;
    display: flex;
    flex-direction: column;
}
.composite {
    left: 796px;
    width: 116px;
    height: 98px;
    border-color: #d9500a;
}
.node-title {
    display: flex;
    align-items: center;
    height: 16px;
    padding: 0 5px 0 6px;
    border-radius: 3px 3px 0 0;
    background: #a23340;
}
.composite .node-title {
    background: #7d2832;
}
.node-title .tri {
    width: 8px;
    height: 6px;
    margin-right: 5px;
    color: #d7b1b5;
}
.mat {
    width: 12px;
    height: 12px;
    margin-left: auto;
}
.outputs {
    padding: 3px 15px 0 0;
    text-align: right;
}
.outputs li, .inputs li {
    position: relative;
    height: 18px;
    line-height: 18px;
}
.socket {
    position: absolute;
    top: 5px;
    width: 8px;
    height: 8px;
    border-radius: 50%;
    background: #a1a1a1;
    box-shadow: 0 0 0 1px #222;
    z-index: 1;
}
.yellow {
    background: #c7c729;
}
.outputs .socket {
    right: -20px;
}
.inputs .socket {
    left: -16px;
}
.node-footer {
    display: flex;
    flex-direction: column;
    gap: 6px;
    margin-top: auto;
    padding: 0 9px 4px;
}
.node-row {
    display: flex;
    height: 15px;
    border-radius: 3px;
    overflow: hidden;
    background: #1d1d1d;
}
.node-row .drop {
    width: 24px;
    height: 15px;
    padding-left: 2px;
    border-radius: 0;
}
.node .icon {
    width: 13px;
    height: 13px;
}
.node-row .chev {
    width: 7px;
}
.node-row input {
    flex: 1;
    padding-left: 6px;
}
.node-row .end {
    width: 15px;
    background: #545454;
}
.node-row .select {
    flex: 1;
    height: 15px;
    border-radius: 0;
    box-shadow: none;
}
.node-row .select select {
    padding-left: 5px;
}
.use-alpha {
    display: flex;
    align-items: center;
    gap: 8px;
    height: 18px;
    margin: 3px 0 0 11px;
}
.use-alpha .check {
    width: 9px;
    height: 9px;
    border-radius: 2px;
}
.use-alpha .check::before {
    width: 3px;
    height: 6px;
    margin: 0 auto;
    border-width: 0 1px 1px 0;
}
.inputs {
    padding: 3px 9px 0 11px;
}
.slider {
    display: flex;
    justify-content: space-between;
    height: 15px;
    line-height: 15px;
    margin: 1px 0 0 -2px;
    padding: 0 13px 0 12px;
    border-radius: 3px;
    background: #585858;
}
.slider input {
    width: 40px;
    text-align: right;
}
.link {
    position: absolute;
    left: 756px;
    top: 239px;
}
.backdrop-name {
    position: absolute;
    left: 29px;
    bottom: 24px;
    color: #fff;
}
.sidebar {
    width: 200px;
    background: #424242;
}
.sidebar .panel-title {
    padding-top: 2px;
}
.tool-panel {
    height: 66px;
    padding: 7px 9px;
    background: #383838;
}
.tool-name {
    display: flex;
    align-items: center;
    gap: 7px;
    height: 22px;
    margin: 0 0 10px 6px;
}
.side-tabs {
    width: 19px;
    display: flex;
    flex-direction: column;
    align-items: flex-start;
    gap: 6px;
    padding-top: 7px;
}
.side-tabs button {
    width: 16px;
    padding: 4px 0;
    writing-mode: vertical-rl;
    transform: rotate(180deg);
    border: 1px solid #3a3a3a;
    border-right: 0;
    border-radius: 4px 0 0 4px;
    background: #2b2b2b;
}
.side-tabs .active {
    background: #424242;
}

/* dope sheet */
.dope-sheet {
    background: #282828;
}
.mode {
    width: 122px;
    margin-left: 7px;
    padding-left: 3px;
}
.dope-sheet .tools, .timeline .tools {
    padding-right: 19px;
}
.toggles > button {
    width: 19px;
}
.snap {
    width: 112px;
}
.dim {
    color: #8c8c8c;
}
.dim .chev {
    color: #6c6c6c;
}
.dope-body {
    display: flex;
    height: 256px;
}
.channels {
    width: 199px;
    padding-top: 2px;
    background: #282828;
}
.channels .search {
    margin: 0 3px 5px 2px;
}
.summary {
    display: flex;
    align-items: center;
    gap: 8px;
    height: 18px;
    padding-left: 3px;
    background: #4d2600;
    border-radius: 4px 0 0 4px;
    color: #c8c8c8;
}
.summary .tri {
    color: #fff;
}
.tracks {
    position: relative;
    flex: 1;
    background: linear-gradient(#2b2b2b 23px, #333 23px);
}
.range {
    position: absolute;
    inset: 23px 54px 0 55px;
    background: #424242;
    border-right: 2px solid #111;
}
.frames {
    position: relative;
    display: flex;
    height: 100%;
    margin: 0 28px 0 22px;
    text-shadow: none;
    background: linear-gradient(#3a3a3a, #3a3a3a) right 23px / 1px 100% no-repeat;
}
.frames span {
    flex: 1 1 0;
    padding-top: 5px;
    text-align: center;
    color: #9c9c9c;
    background:
        linear-gradient(#292929, #292929) center 23px / 1px 100% no-repeat,
        linear-gradient(#3a3a3a, #3a3a3a) left 23px / 1px 100% no-repeat;
}
.summary-strip {
    position: absolute;
    inset: 25px 0 auto 0;
    height: 16px;
    background: rgba(77, 38, 0, 0.4);
}
.playhead {
    position: absolute;
    left: 54px;
    top: 2px;
    bottom: 0;
    width: 2px;
    display: flex;
    justify-content: center;
    background: #4f7cc4;
}
.playhead b {
    flex-shrink: 0;
    width: 25px;
    height: 20px;
    line-height: 20px;
    margin: 0 -12px;
    border-radius: 4px;
    background: #5078b8;
    font-weight: normal;
    color: #fff;
    text-align: center;
}
.scrollbar {
    position: absolute;
    left: 8px;
    right: 9px;
    bottom: 1px;
    height: 9px;
    border-radius: 5px;
    background: #676767;
}
.scrollbar::before, .scrollbar::after {
    content: "";
    position: absolute;
    left: 1px;
    top: 1px;
    width: 7px;
    height: 7px;
    border-radius: 50%;
    background: #4d4d4d;
}
.scrollbar::after {
    left: auto;
    right: 1px;
}
.toggle-right {
    position: absolute;
    right: 0;
    top: 14px;
    width: 7px;
    height: 14px;
    background: #1f1f1f;
    border-radius: 4px 0 0 4px;
}

/* timeline */
.timeline {
    height: 24px;
    padding-top: 2px;
}
.timeline-left, .transport {
    display: flex;
    align-items: center;
}
.timeline-left {
    flex: 1 1 0;
}
.transport {
    gap: 7px;
    margin-right: 10px;
}
.timeline .tools {
    flex: 1 1 0;
    justify-content: flex-end;
}
.timeline .popovers {
    margin-left: 7px;
}
.popovers > .drop {
    width: auto;
    padding: 0 2px 0 7px;
    gap: 5px;
}
.transport .group > button {
    width: 19px;
    color: #e6e6e6;
}
.transport .group > button:only-child {
    width: 18px;
}
.current {
    width: 73px;
    background: #585858;
    text-align: center;
}
.num {
    display: flex;
    align-items: center;
    justify-content: space-between;
    width: 87px;
    padding: 0 14px 0 15px;
    background: #585858;
}
.num + .num {
    width: 83px;
}
.num input {
    width: 30px;
    text-align: right;
}

/* outliner */
.outliner .area-header {
    gap: 7px;
    padding-right: 7px;
}
.outliner .search {
    width: 110px;
    margin: 0 auto 0 28px;
}
.tree {
    color: #c8c8c8;
}
.tree li {
    display: flex;
    align-items: center;
    height: 20px;
    padding: 2px 8px 0 0;
    background: #2b2b2b;
}
.tree li:first-child {
    height: 21px;
    padding-left: 22px;
    gap: 6px;
}
.tree li:nth-child(odd) {
    background: #282828;
}
.tree .level1 {
    padding-left: 26px;
}
.tree .level1 .tri {
    margin-right: 10px;
}
.tree .level2 {
    padding-left: 46px;
    background: linear-gradient(#555, #555) 50px 0 / 1px 10px no-repeat, #282828;
}
.tree .level2 .tri {
    margin-right: 7px;
}
.badge {
    display: flex;
    align-items: center;
    justify-content: center;
    width: 20px;
    height: 18px;
    margin: 0 4px 0 5px;
    border-radius: 5px;
    background: #444;
}
.green {
    margin-left: 20px;
    background: #5a5a5a;
    color: #13b68d;
}
.orange {
    margin-right: 7px;
    color: #ce844a;
}
.white:checked {
    width: 11px;
    height: 11px;
    border-radius: 1px;
    background: #e6e6e6;
}
.white:checked::before {
    border-color: #222;
}
.eye {
    margin-left: auto;
    color: #dcdcdc;
}

/* properties */
.properties {
    flex: 1;
    display: flex;
    flex-direction: column;
}
.context {
    display: flex;
    align-items: center;
    gap: 7px;
    margin-left: 15px;
    color: #fff;
}
.properties .tools {
    padding-right: 8px;
}
.props-body {
    flex: 1;
    display: flex;
}
.prop-tabs {
    width: 28px;
    display: flex;
    flex-direction: column;
    gap: 2px;
    padding: 9px 0 0 2px;
    background: #232323;
}
.prop-tabs button {
    height: 26px;
    border-radius: 4px 0 0 4px;
    background: #2b2b2b;
    color: #c8c8c8;
}
.prop-tabs .alone {
    margin-bottom: 8px;
}
.prop-tabs .last {
    margin-top: 16px;
}
.prop-tabs .active {
    background: #424242;
    color: #fff;
}
.prop-tabs .red {
    color: #c15a62;
}
.panels {
    flex: 1;
    background: #424242;
    color: #d2d2d2;
}
.prop-row {
    display: flex;
    align-items: center;
    gap: 9px;
    height: 18px;
    padding-right: 7px;
}
.prop-row label {
    flex: 1;
    text-align: right;
}
.prop-row .select {
    width: 153px;
}
.prop-row > input {
    width: 153px;
    height: 100%;
    background: #585858;
    text-align: center;
}
.engine {
    margin: 10px 0 9px;
}
.sampling {
    display: flex;
    flex-direction: column;
    gap: 1px;
    height: 81px;
    padding-top: 9px;
    background: #383838;
}
.sampling .prop-row input {
    border-radius: 0 0 4px 4px;
}
.sampling .prop-row:first-child input {
    border-radius: 4px 4px 0 0;
}
.denoise {
    display: flex;
    align-items: center;
    justify-content: flex-end;
    gap: 10px;
    margin-top: 8px;
    padding-right: 10px;
    color: #fff;
}

/* status bar */
.statusbar {
    display: flex;
    align-items: center;
    height: 18px;
    margin-top: 2px;
    padding: 1px 32px 0 8px;
    flex-shrink: 0;
    background: #303030;
    color: #a6a6a6;
}
.hint {
    display: flex;
    align-items: center;
    gap: 8px;
}
.select-hint {
    width: 67px;
    gap: 10px;
}
.box-hint {
    width: 171px;
}
.box-hint .icon {
    width: 18px;
}
.pan-hint {
    width: 236px;
}
.stats {
    margin-left: auto;
}
```
